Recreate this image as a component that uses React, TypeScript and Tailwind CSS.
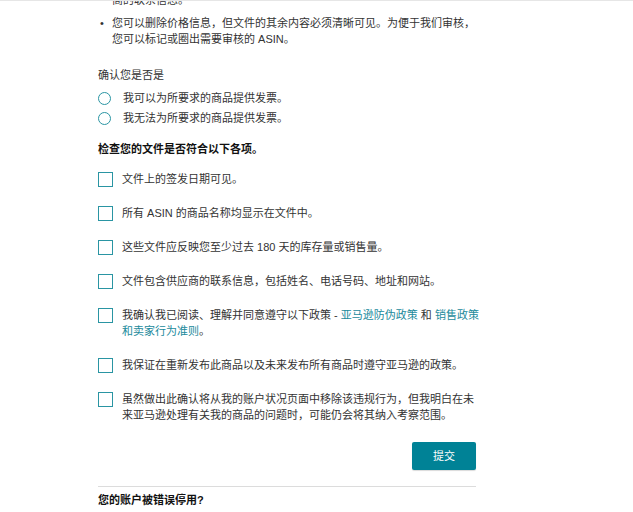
import React from 'react'

const checks: React.ReactNode[] = [
  '文件上的签发日期可见。',
  '所有 ASIN 的商品名称均显示在文件中。',
  '这些文件应反映您至少过去 180 天的库存量或销售量。',
  '文件包含供应商的联系信息，包括姓名、电话号码、地址和网站。',
  <>
    我确认我已阅读、理解并同意遵守以下政策 - <a className="text-[#1b8a9c]">亚马逊防伪政策</a> 和{' '}
    <a className="text-[#1b8a9c]">销售政策</a>
    <br />
    <a className="text-[#1b8a9c]">和卖家行为准则</a>。
  </>,
  '我保证在重新发布此商品以及未来发布所有商品时遵守亚马逊的政策。',
  <>
    虽然做出此确认将从我的账户状况页面中移除该违规行为，但我明白在未
    <br />
    来亚马逊处理有关我的商品的问题时，可能仍会将其纳入考察范围。
  </>,
]

const App = () => {
  return (
    <div
      className="h-[512px] w-[633px] overflow-hidden border-t border-[#e6e6e6] bg-white text-[11px] leading-[16px] text-[#333]"
      style={{ fontFamily: '"Liberation Sans", "Noto Sans CJK SC", sans-serif' }}
    >
      <div className="mt-[-9px] ml-[98px] w-[378px]">
        <p className="pl-[14px]">商的联系信息。</p>

        <ul className="mt-[7px]">
          <li className="flex">
            <span className="w-[14px] shrink-0 pl-[2px]">•</span>
            <span>
              您可以删除价格信息，但文件的其余内容必须清晰可见。为便于我们审核，
              <br />
              您可以标记或圈出需要审核的 ASIN。
            </span>
          </li>
        </ul>

        <p className="mt-[20px]">确认您是否是</p>
        <div className="mt-[7px] flex flex-col gap-[4px]">
          {['我可以为所要求的商品提供发票。', '我无法为所要求的商品提供发票。'].map((t) => (
            <label key={t} className="flex items-center">
              <span className="h-[13px] w-[13px] rounded-full border border-[#2a95a3]" />
              <span className="ml-[12px]">{t}</span>
            </label>
          ))}
        </div>

        <h3 className="mt-[15px] font-bold text-[#111]">检查您的文件是否符合以下各项。</h3>

        <div className="mt-[14px] flex flex-col gap-[18px]">
          {checks.map((c, i) => (
            <label key={i} className="flex items-start">
              <span className="mt-[1px] h-[15px] w-[15px] shrink-0 border border-[#2a95a3]" />
              <span className="ml-[9px] whitespace-nowrap">{c}</span>
            </label>
          ))}
        </div>

        <div className="mt-[19px] flex justify-end">
          <button className="h-[28px] w-[64px] rounded-[2px] bg-[#008296] text-[11px] text-white shadow-[0_1px_1px_rgba(0,0,0,0.15)]">
            提交
          </button>
        </div>

        <div className="mt-[16px] border-t border-[#dcdcdc]" />
        <h3 className="mt-[5px] font-bold text-[#111]">您的账户被错误停用?</h3>
      </div>
    </div>
  )
}

export default App
